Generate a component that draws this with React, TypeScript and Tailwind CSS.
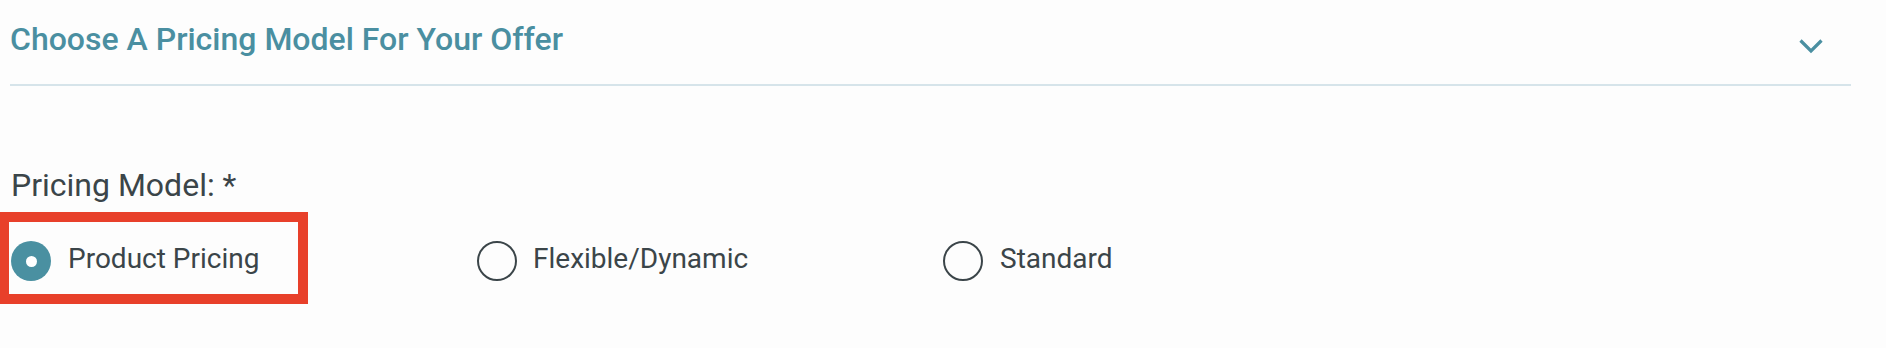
import React from "react";

function Radio({ checked }: { checked?: boolean }) {
  if (checked) {
    return (
      <span className="flex h-[40px] w-[40px] shrink-0 translate-y-[3px] items-center justify-center rounded-full bg-[#4a90a1]">
        <span className="h-[11px] w-[11px] rounded-full bg-white" />
      </span>
    );
  }
  return (
    <span className="h-[40px] w-[40px] shrink-0 translate-y-[3px] rounded-full border-2 border-[#3b4549] bg-transparent" />
  );
}

export default function App() {
  return (
    <div className="h-[348px] w-[1886px] overflow-hidden bg-[#fdfdfd] font-['Roboto',sans-serif]">
      <div className="ml-[10px] flex h-[86px] w-[1841px] items-start justify-between border-b-2 border-[#d6e4ea] pt-[21px]">
        <h2 className="text-[32px] font-medium leading-[36px] text-[#4a8fa1]">
          Choose A Pricing Model For Your Offer
        </h2>
        <svg
          className="mr-[28px] mt-[18px]"
          width="24"
          height="15"
          viewBox="0 0 24 15"
          fill="none"
        >
          <path d="M1.5 1.5 L12 12 L22.5 1.5" stroke="#4a8fa1" strokeWidth="3.2" />
        </svg>
      </div>

      <div className="ml-[11px] mt-[81px] text-[32px] leading-[36px] text-[#3b4549]">
        Pricing Model: *
      </div>

      <div className="mt-[9px] flex h-[92px] items-stretch text-[28px] leading-[32px] text-[#3b4549]">
        <label className="flex w-[308px] items-center gap-[17px] border-[10px] border-l-[9px] border-[#e8402a] pl-[2px]">
          <Radio checked />
          <span className="translate-y-[1px]">Product Pricing</span>
        </label>
        <label className="ml-[169px] flex w-[466px] items-center gap-[16px]">
          <Radio />
          <span className="translate-y-[1px]">Flexible/Dynamic</span>
        </label>
        <label className="flex items-center gap-[17px]">
          <Radio />
          <span className="translate-y-[1px]">Standard</span>
        </label>
      </div>
    </div>
  );
}
